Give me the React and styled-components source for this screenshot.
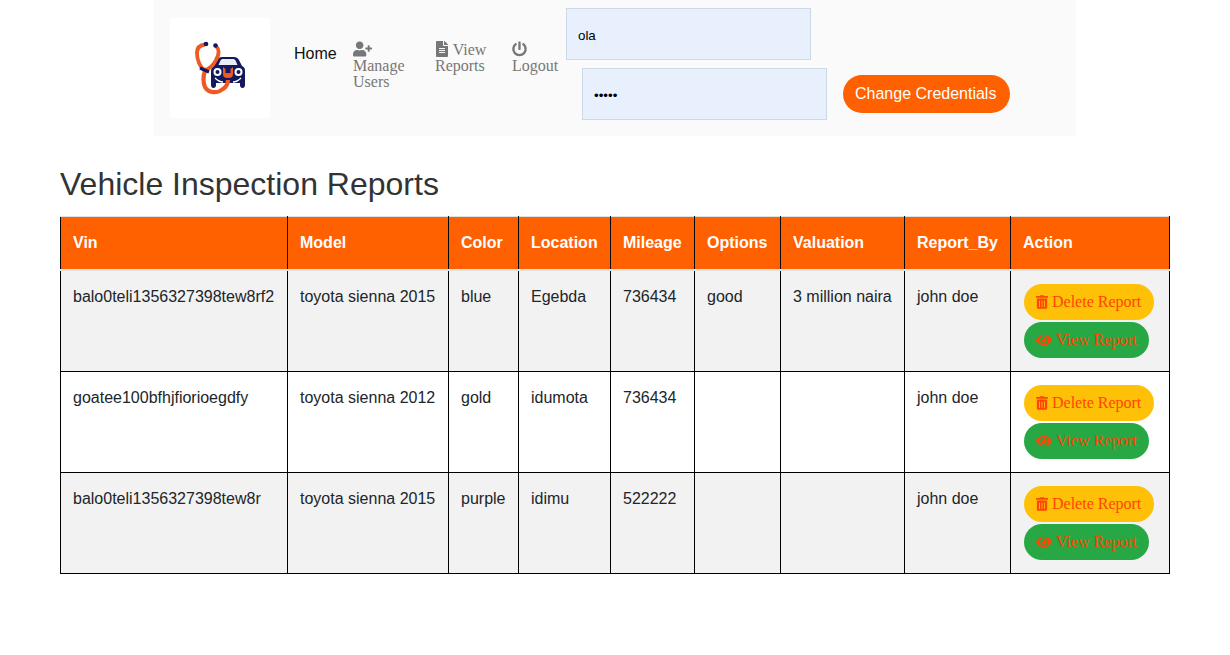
import React from 'react';
import styled, { createGlobalStyle } from 'styled-components';
import { FaUserPlus, FaFileAlt, FaPowerOff, FaTrashAlt, FaEye } from 'react-icons/fa';

const GlobalStyle = createGlobalStyle`
  * { box-sizing: border-box; }
  body {
    margin: 0;
    font-family: "Liberation Sans", Arial, sans-serif;
    font-size: 16px;
    line-height: 1.5;
    color: #212529;
    background: #fff;
  }
`;

const Page = styled.div`
  width: 1230px;
  height: 655px;
  overflow: hidden;
`;

const Nav = styled.nav`
  display: flex;
  align-items: flex-start;
  width: 922px;
  height: 136px;
  margin-left: 154px;
  padding-left: 16px;
  background: #fafafa;
`;

const LogoBox = styled.div`
  flex: none;
  width: 100px;
  height: 100px;
  margin-top: 18px;
  background: #fff;
`;

const Home = styled.a`
  flex: none;
  margin: 42px 0 0 24px;
  width: 59px;
  color: #111;
  font-size: 16px;
  line-height: 24px;
`;

const NavLink = styled.a`
  flex: none;
  width: ${({ $width }) => $width}px;
  margin-top: 41px;
  color: #777;
  font-family: "Liberation Serif", "Times New Roman", serif;
  font-size: 16px;
  line-height: 16px;
  svg {
    height: 16px;
    width: ${({ $icon }) => $icon}px;
    vertical-align: -2px;
  }
`;

const Credentials = styled.form`
  flex: none;
  display: flex;
  flex-wrap: wrap;
  align-items: flex-start;
  width: 460px;
  padding-top: 8px;
`;

const Field = styled.input`
  display: block;
  width: 245px;
  height: 52px;
  margin-left: ${({ $indent }) => $indent}px;
  margin-bottom: 8px;
  padding: 2px 12px 0 11px;
  background: #e8f0fe;
  border: 1px solid #ced9e8;
  border-radius: 0;
  color: #000;
  font-family: "Liberation Sans", Arial, sans-serif;
  font-size: 13.33px;
  outline: none;
`;

const Break = styled.div`
  flex-basis: 100%;
  height: 0;
`;

const ChangeButton = styled.button`
  height: 38px;
  margin: 7px 0 0 16px;
  padding: 0 14px 0 12px;
  background: #ff6000;
  border: 0;
  border-radius: 19px;
  color: #fff;
  font-family: "Liberation Sans", Arial, sans-serif;
  font-size: 16px;
`;

const Content = styled.main`
  padding: 0 60px;
`;

const Heading = styled.h2`
  margin: 28px 0 11px;
  color: #333;
  font-size: 32px;
  font-weight: 400;
  line-height: 41px;
`;

const Table = styled.table`
  width: 1109px;
  table-layout: fixed;
  border-collapse: collapse;
`;

const Th = styled.th`
  width: ${({ $width }) => $width}px;
  height: 53px;
  padding: 12px;
  background: #ff6000;
  border-top: 1px solid #dee2e6;
  border-bottom: 2px solid #dee2e6;
  border-left: 1px solid #000;
  border-right: 1px solid #000;
  color: #fff;
  font-size: 16px;
  font-weight: 700;
  text-align: left;
`;

const Row = styled.tr`
  background: ${({ $shaded }) => ($shaded ? '#f2f2f2' : '#fff')};
  height: ${({ $height }) => $height}px;
`;

const Td = styled.td`
  padding: 14px 12px 12px;
  border: 1px solid #000;
  color: #212529;
  font-size: 16px;
  line-height: 24px;
  vertical-align: top;
  white-space: nowrap;
`;

const ActionCell = styled(Td)`
  padding: 13px 0 0 13px;
`;

const Pill = styled.button`
  display: block;
  height: 36px;
  margin-bottom: 2px;
  padding: 0 ${({ $right }) => $right}px 0 12px;
  background: ${({ $bg }) => $bg};
  border: 0;
  border-radius: 18px;
  color: #ff4500;
  font-family: "Liberation Serif", "Times New Roman", serif;
  font-size: 16px;
  white-space: nowrap;
  svg {
    width: ${({ $icon }) => $icon}px;
    height: 16px;
    vertical-align: -3px;
    margin-right: 4px;
  }
`;

const columns = [
  ['Vin', 227], ['Model', 161], ['Color', 70], ['Location', 92], ['Mileage', 84],
  ['Options', 86], ['Valuation', 124], ['Report_By', 106], ['Action', 159],
];

const reports = [
  ['balo0teli1356327398tew8rf2', 'toyota sienna 2015', 'blue', 'Egebda', '736434', 'good', '3 million naira', 'john doe'],
  ['goatee100bfhjfiorioegdfy', 'toyota sienna 2012', 'gold', 'idumota', '736434', '', '', 'john doe'],
  ['balo0teli1356327398tew8r', 'toyota sienna 2015', 'purple', 'idimu', '522222', '', '', 'john doe'],
];

const Logo = () => (
  <svg width="100" height="100" viewBox="0 0 100 100">
    {/* car */}
    <path d="M41 53 C41 50 43 49 44 48 L47 42 C48 40 50 39 52 39 L64 39 C66 39 68 40 69 42 L72 48 C74 49 75 50 75 53 L75 67 C75 69 74 70 72.5 70 C71 70 70 69 70 67 L70 65 L46 65 L46 67 C46 69 45 70 43.5 70 C42 70 41 69 41 67 Z" fill="#14195e" />
    <path d="M48.5 47 L50.5 42.5 C51 41.5 52 41 53 41 L63 41 C64 41 65 41.5 65.5 42.5 L67.5 47 Z" fill="#e9ebf6" />
    <circle cx="47.5" cy="54" r="4" fill="#fff" />
    <circle cx="47.5" cy="54" r="2" fill="#14195e" />
    <circle cx="68.5" cy="54" r="4" fill="#fff" />
    <circle cx="68.5" cy="54" r="2" fill="#14195e" />
    <path d="M45 60 C48 63 51 64 53 64 M71 60 C68 63 65 64 63 64" stroke="#fff" strokeWidth="1.3" fill="none" />
    {/* stethoscope */}
    <path d="M35 26.5 C30 27 27 30 27 35 C27 42 30 49 34 52 C38 52 43 48 46 42 C49 37 50 32 46 28" fill="none" stroke="#ee5a24" strokeWidth="3.8" />
    <path d="M35 53 C33 58 33 65 35 69 C38 75 47 76 53 71 C56 69 58 66 58 62" fill="none" stroke="#ee5a24" strokeWidth="4.2" />
    <circle cx="36" cy="26" r="2.3" fill="#14195e" />
    <circle cx="45.5" cy="27.5" r="2.3" fill="#14195e" />
    <path d="M30 50 L39 54" stroke="#14195e" strokeWidth="3.2" />
    {/* wrench */}
    <path d="M53 49 L53 56 C53 59 55 60 58 60 C61 60 63 59 63 56 L63 49 L60.5 51 L60.5 55 L55.5 55 L55.5 51 Z" fill="#ee5a24" />
  </svg>
);

const App = () => (
  <Page>
    <GlobalStyle />
    <Nav>
      <LogoBox><Logo /></LogoBox>
      <Home>Home</Home>
      <NavLink $width={82} $icon={19}><FaUserPlus /><br />Manage Users</NavLink>
      <NavLink $width={77} $icon={14}><FaFileAlt /> View Reports</NavLink>
      <NavLink $width={54} $icon={15}><FaPowerOff /><br />Logout</NavLink>
      <Credentials>
        <Field defaultValue="ola" />
        <Break />
        <Field $indent={16} type="password" defaultValue="abcde" />
        <ChangeButton type="button">Change Credentials</ChangeButton>
      </Credentials>
    </Nav>
    <Content>
      <Heading>Vehicle Inspection Reports</Heading>
      <Table>
        <thead>
          <tr>{columns.map(([name, width]) => <Th key={name} $width={width}>{name}</Th>)}</tr>
        </thead>
        <tbody>
          {reports.map((report, i) => (
            <Row key={report[0]} $shaded={i !== 1} $height={i === 0 ? 102 : 101}>
              {report.map((value, j) => <Td key={j}>{value}</Td>)}
              <ActionCell>
                <Pill $bg="#ffc107" $icon={12} $right={13}><FaTrashAlt />Delete Report</Pill>
                <Pill $bg="#28a745" $icon={16} $right={12}><FaEye />View Report</Pill>
              </ActionCell>
            </Row>
          ))}
        </tbody>
      </Table>
    </Content>
  </Page>
);

export default App;
